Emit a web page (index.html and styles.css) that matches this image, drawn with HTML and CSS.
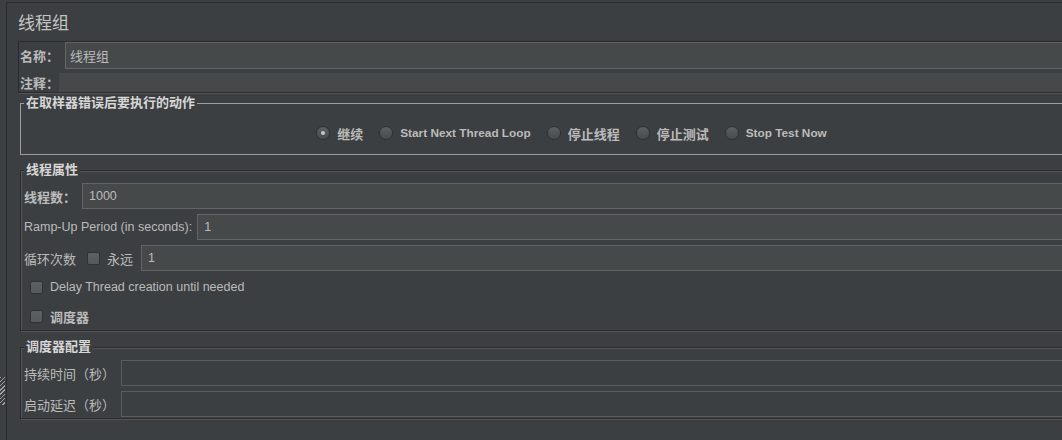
FILE: index.html
```html
<!DOCTYPE html>
<html lang="zh-CN">
<head>
  <meta charset="UTF-8">
  <title>线程组</title>
  <link rel="stylesheet" href="styles.css">
</head>
<body>
  <div class="splitter"><div class="grip"></div></div>

  <div class="main">
    <div class="title">线程组</div>

    <div class="name-box">
      <div class="name-row">
        <label class="cn-label">名称：</label>
        <input class="field name-field" type="text" value="线程组">
      </div>
      <div class="name-row comment-row">
        <label class="cn-label">注释：</label>
        <div class="comment-field"></div>
      </div>
    </div>

    <fieldset class="group plain">
      <legend>在取样器错误后要执行的动作</legend>
      <div class="radio-row">
        <span class="radio-item"><span class="radio checked"></span><span class="cn bold">继续</span></span>
        <span class="radio-item"><span class="radio"></span><span class="bold latin">Start Next Thread Loop</span></span>
        <span class="radio-item"><span class="radio"></span><span class="cn bold">停止线程</span></span>
        <span class="radio-item"><span class="radio"></span><span class="cn bold">停止测试</span></span>
        <span class="radio-item"><span class="radio"></span><span class="bold latin">Stop Test Now</span></span>
      </div>
    </fieldset>

    <fieldset class="group props">
      <legend>线程属性</legend>
      <div class="prop-row">
        <label class="cn-label">线程数：</label>
        <input class="field threads-field" type="text" value="1000">
      </div>
      <div class="prop-row">
        <label>Ramp-Up Period (in seconds):</label>
        <input class="field ramp-field" type="text" value="1">
      </div>
      <div class="prop-row">
        <label class="cn">循环次数</label>
        <span class="check loop-check"></span>
        <span class="cn forever">永远</span>
        <input class="field loop-field" type="text" value="1">
      </div>
      <div class="check-row first">
        <span class="check"></span>
        <span>Delay Thread creation until needed</span>
      </div>
      <div class="check-row">
        <span class="check"></span>
        <span class="cn bold">调度器</span>
      </div>
    </fieldset>

    <fieldset class="group sched">
      <legend>调度器配置</legend>
      <div class="prop-row">
        <label class="cn-label plain-label">持续时间（秒）</label>
        <input class="field off" type="text" value="" disabled>
      </div>
      <div class="prop-row">
        <label class="cn-label plain-label">启动延迟（秒）</label>
        <input class="field off" type="text" value="" disabled>
      </div>
    </fieldset>
  </div>
</body>
</html>
```

FILE: styles.css
```css
body {
  margin: 0;
  height: 440px;
  display: flex;
  overflow: hidden;
  background: #3c3f41;
  color: #bbbbbb;
  font-family: "Liberation Sans", "Noto Sans CJK SC", sans-serif;
  font-size: 12.5px;
}
.splitter {
  flex: none;
  width: 6px;
  padding-top: 377px;
}
.grip {
  width: 5px;
  height: 28px;
  background: repeating-linear-gradient(135deg, #a0a0a0 0 1px, transparent 1px 3px);
}
.main {
  flex: none;
  width: 1102px;
  margin-top: 2px;
  padding-left: 11px;
  border-top: 1px solid #2b2b2b;
  border-left: 1px solid #2b2b2b;
}
.title {
  height: 35px;
  padding-top: 3px;
  line-height: 35px;
  font-size: 17px;
  color: #c4c4c4;
}
.cn {
  font-size: 13px;
}
.bold {
  font-weight: bold;
}
.latin {
  font-size: 11.8px;
}
.cn-label {
  font-size: 13px;
  font-weight: bold;
  white-space: nowrap;
}
.plain-label {
  font-weight: normal;
}

/* name / comment */
.name-box {
  padding-left: 1px;
  border: 1px solid #2b2b2b;
  box-shadow: 1px 1px 0 #555;
}
.name-row {
  display: flex;
  align-items: center;
  height: 27px;
}
.comment-row {
  height: 19px;
  margin-top: 4px;
}
.field {
  flex: 1;
  min-width: 0;
  height: 26px;
  box-sizing: border-box;
  margin: 0;
  padding: 0 6px;
  border: 1px solid #646464;
  background: #45494a;
  color: #bbbbbb;
  font: inherit;
  outline: none;
}
.name-field {
  height: 27px;
  margin-left: 6px;
  padding-left: 4px;
  font-size: 13px;
}
.comment-field {
  flex: 1;
  height: 19px;
  background: #45494a;
}

/* groups */
.group {
  min-width: 0;
  margin: 7px 0 0 2px;
  padding: 5px 0 2px 3px;
  border: 1px solid #2b2b2b;
  box-shadow: inset 1px 1px 0 #555, 1px 1px 0 #555;
}
.group legend {
  padding: 0 2px;
  line-height: 16px;
  font-size: 13px;
  font-weight: bold;
  color: #d6d6d6;
  background: #3c3f41;
}
.group.plain {
  margin-top: 2px;
  padding: 14px 0 13px 3px;
  border-color: #9d9d9d;
  box-shadow: none;
}
.group.sched {
  margin-top: 8px;
  padding-bottom: 1px;
}

/* radios */
.radio-row {
  display: flex;
  justify-content: center;
  align-items: center;
  gap: 16px;
  height: 16px;
}
.radio-item {
  display: flex;
  align-items: center;
  gap: 7px;
}
.radio {
  display: grid;
  place-items: center;
  width: 14px;
  height: 14px;
  box-sizing: border-box;
  border: 1px solid #2e3032;
  border-radius: 50%;
  background: linear-gradient(#5d6063, #484b4e);
}
.radio.checked::after {
  content: "";
  width: 4px;
  height: 4px;
  border-radius: 50%;
  background: #c6c6c6;
}

/* thread properties */
.prop-row {
  display: flex;
  align-items: center;
  height: 26px;
  margin-top: 5px;
}
.prop-row:first-of-type {
  margin-top: 0;
}
.threads-field {
  margin-left: 6px;
}
.ramp-field {
  margin-left: 5px;
}
.loop-check {
  margin-left: 11px;
}
.forever {
  margin-left: 7px;
}
.loop-field {
  margin-left: 8px;
}
.check {
  flex: none;
  width: 13px;
  height: 13px;
  box-sizing: border-box;
  border: 1px solid #2f3133;
  border-radius: 2px;
  background: linear-gradient(#5e6163, #56595b);
}
.check-row {
  display: flex;
  align-items: center;
  gap: 7px;
  height: 24px;
  margin-top: 5px;
  padding-left: 6px;
}
.check-row.first {
  margin-top: 4px;
}
.sched .field {
  margin-left: 6px;
}
.field.off {
  border-color: #595b5d;
  background: transparent;
}
```
